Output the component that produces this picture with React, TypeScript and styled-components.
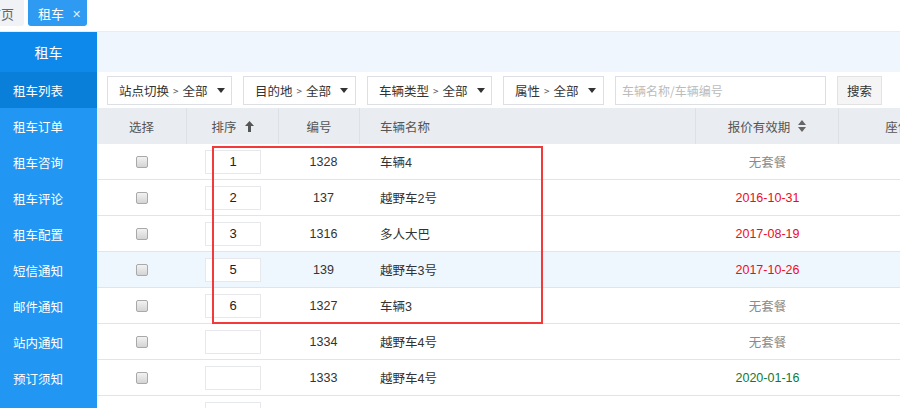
import styled, { createGlobalStyle } from 'styled-components';

const GlobalStyle = createGlobalStyle`
  html, body {
    margin: 0;
    padding: 0;
    background: #ffffff;
    font-family: "Noto Sans CJK SC", "Liberation Sans", sans-serif;
    font-size: 12px;
    color: #333;
    overflow: hidden;
  }
`;

const Page = styled.div`
  width: 900px;
  height: 408px;
  display: flex;
  flex-direction: column;
  overflow: hidden;
`;

const TabBar = styled.div`
  height: 31px;
  display: flex;
  align-items: flex-start;
  gap: 4px;
  border-bottom: 1px solid #e4eefa;
  margin-left: -22px;
`;

const Tab = styled.div<{ $active?: boolean }>`
  height: 26px;
  padding: 0 ${(p) => (p.$active ? '6px' : '10px')} 0 10px;
  display: flex;
  align-items: center;
  gap: 8px;
  border-radius: 0 0 3px 3px;
  font-size: 13px;
  color: ${(p) => (p.$active ? '#fff' : '#666')};
  background: ${(p) => (p.$active ? '#2e9af2' : '#f0f2f6')};
`;

const Close = styled.span`
  font-size: 11px;
  color: #dceeff;
`;

const Body = styled.div`
  flex: 1;
  display: flex;
  min-height: 0;
`;

const Sidebar = styled.div`
  width: 97px;
  flex-shrink: 0;
  background: #2196f3;
  display: flex;
  flex-direction: column;
`;

const SideTitle = styled.div`
  height: 40px;
  display: flex;
  align-items: center;
  justify-content: center;
  background: #0c89ea;
  color: #fff;
  font-size: 14px;
`;

const SideItem = styled.div<{ $active?: boolean }>`
  height: 36px;
  display: flex;
  align-items: center;
  padding-left: 13px;
  color: #fff;
  font-size: 12.5px;
  background: ${(p) => (p.$active ? '#0a7fda' : 'transparent')};
`;

const Main = styled.div`
  flex: 1;
  min-width: 0;
  display: flex;
  flex-direction: column;
  position: relative;
  overflow: hidden;
`;

const TopStrip = styled.div`
  height: 40px;
  background: #eff6fd;
  flex-shrink: 0;
`;

const Filters = styled.div`
  height: 36px;
  display: flex;
  align-items: center;
  gap: 11px;
  padding-left: 10px;
  flex-shrink: 0;
`;

const Select = styled.div<{ $w: number }>`
  width: ${(p) => p.$w}px;
  height: 29px;
  box-sizing: border-box;
  border: 1px solid #dcdfe3;
  display: flex;
  align-items: center;
  padding-left: 11px;
  gap: 4px;
  color: #333;
  font-size: 12.5px;
  background: #fff;
`;

const Gt = styled.span`
  font-size: 10px;
  color: #555;
`;

const Caret = styled.span`
  width: 0;
  height: 0;
  border-left: 4px solid transparent;
  border-right: 4px solid transparent;
  border-top: 5px solid #333;
  margin-left: 5px;
`;

const SearchInput = styled.div`
  width: 211px;
  height: 29px;
  box-sizing: border-box;
  border: 1px solid #dcdfe3;
  display: flex;
  align-items: center;
  padding-left: 6px;
  color: #bbb;
  font-size: 12px;
`;

const SearchBtn = styled.div`
  width: 45px;
  height: 29px;
  box-sizing: border-box;
  border: 1px solid #e2e2e2;
  background: #f5f5f5;
  display: flex;
  align-items: center;
  justify-content: center;
  font-size: 12.5px;
  color: #333;
`;

const cols = '90px 92px 81px 336px 143px 130px';

const HeadRow = styled.div`
  display: grid;
  grid-template-columns: ${cols};
  height: 36px;
  background: #e9ecf0;
  flex-shrink: 0;
`;

const HeadCell = styled.div<{ $left?: boolean; $last?: boolean }>`
  display: flex;
  align-items: center;
  justify-content: ${(p) => (p.$left ? 'flex-start' : 'center')};
  padding-left: ${(p) => (p.$left ? '20px' : '0')};
  gap: 8px;
  color: #555;
  font-size: 12.5px;
  border-right: ${(p) => (p.$last ? 'none' : '1px solid #dde1e6')};
  white-space: nowrap;
`;

const Row = styled.div<{ $hl?: boolean }>`
  display: grid;
  grid-template-columns: ${cols};
  height: 36px;
  box-sizing: border-box;
  border-bottom: 1px solid #e1e5ea;
  background: ${(p) => (p.$hl ? '#eff7fe' : '#fff')};
  flex-shrink: 0;
`;

const Cell = styled.div<{ $left?: boolean; $color?: string; $shift?: number }>`
  display: flex;
  align-items: center;
  justify-content: ${(p) => (p.$left ? 'flex-start' : 'center')};
  padding-left: ${(p) => (p.$left ? '20px' : `${p.$shift || 0}px`)};
  color: ${(p) => p.$color || '#333'};
  font-size: 12.5px;
  font-family: "Liberation Sans", "Noto Sans CJK SC", sans-serif;
`;

const Check = styled.span`
  width: 10px;
  height: 10px;
  border: 1px solid #a9a9a9;
  border-radius: 2px;
  background: linear-gradient(#f2f2f2, #d4d4d4);
`;

const SortCell = styled.div`
  display: flex;
  align-items: center;
  padding-left: 18px;
`;

const SortBox = styled.div`
  width: 56px;
  height: 24px;
  box-sizing: border-box;
  border: 1px solid #e6e8eb;
  display: flex;
  align-items: center;
  justify-content: center;
  font-family: "Liberation Sans", sans-serif;
  font-size: 13px;
  color: #222;
  background: #fff;
`;

const Highlight = styled.div`
  position: absolute;
  left: 115px;
  top: 114px;
  width: 327px;
  height: 174px;
  border: 2.5px solid #f23a3a;
  pointer-events: none;
`;

const UpArrow = () => (
  <svg width="9" height="11" viewBox="0 0 9 11">
    <path d="M4.5 0 L9 5 H6 V11 H3 V5 H0 Z" fill="#555" />
  </svg>
);

const BothArrow = () => (
  <svg width="8" height="12" viewBox="0 0 8 12">
    <path d="M4 0 L8 5 H0 Z M0 7 H8 L4 12 Z" fill="#666" />
  </svg>
);

const menu = ['租车订单', '租车咨询', '租车评论', '租车配置', '短信通知', '邮件通知', '站内通知', '预订须知'];

type Car = { sort: string; id: string; name: string; price: string; color: string; hl?: boolean };

const cars: Car[] = [
  { sort: '1', id: '1328', name: '车辆4', price: '无套餐', color: '#8a8a8a' },
  { sort: '2', id: '137', name: '越野车2号', price: '2016-10-31', color: '#ee0a24' },
  { sort: '3', id: '1316', name: '多人大巴', price: '2017-08-19', color: '#ee0a24' },
  { sort: '5', id: '139', name: '越野车3号', price: '2017-10-26', color: '#ee0a24', hl: true },
  { sort: '6', id: '1327', name: '车辆3', price: '无套餐', color: '#8a8a8a' },
  { sort: '', id: '1334', name: '越野车4号', price: '无套餐', color: '#8a8a8a' },
  { sort: '', id: '1333', name: '越野车4号', price: '2020-01-16', color: '#0b7a37' },
  { sort: '', id: '1335', name: '越野车5号', price: '无套餐', color: '#8a8a8a' },
];

export default function App() {
  return (
    <Page>
      <GlobalStyle />
      <TabBar>
        <Tab>首页</Tab>
        <Tab $active>
          租车<Close>✕</Close>
        </Tab>
      </TabBar>
      <Body>
        <Sidebar>
          <SideTitle>租车</SideTitle>
          <SideItem $active>租车列表</SideItem>
          {menu.map((m) => (
            <SideItem key={m}>{m}</SideItem>
          ))}
        </Sidebar>
        <Main>
          <TopStrip />
          <Filters>
            <Select $w={125}>
              站点切换 <Gt>&gt;</Gt> 全部 <Caret />
            </Select>
            <Select $w={113}>
              目的地 <Gt>&gt;</Gt> 全部 <Caret />
            </Select>
            <Select $w={125}>
              车辆类型 <Gt>&gt;</Gt> 全部 <Caret />
            </Select>
            <Select $w={101}>
              属性 <Gt>&gt;</Gt> 全部 <Caret />
            </Select>
            <SearchInput>车辆名称/车辆编号</SearchInput>
            <SearchBtn>搜索</SearchBtn>
          </Filters>
          <HeadRow>
            <HeadCell>选择</HeadCell>
            <HeadCell>
              排序 <UpArrow />
            </HeadCell>
            <HeadCell>编号</HeadCell>
            <HeadCell $left>车辆名称</HeadCell>
            <HeadCell>
              报价有效期 <BothArrow />
            </HeadCell>
            <HeadCell $last>座位数</HeadCell>
          </HeadRow>
          {cars.map((c, i) => (
            <Row key={i} $hl={c.hl}>
              <Cell>
                <Check />
              </Cell>
              <SortCell>
                <SortBox>{c.sort}</SortBox>
              </SortCell>
              <Cell $shift={8}>{c.id}</Cell>
              <Cell $left>{c.name}</Cell>
              <Cell $color={c.color}>{c.price}</Cell>
              <Cell />
            </Row>
          ))}
          <Highlight />
        </Main>
      </Body>
    </Page>
  );
}
